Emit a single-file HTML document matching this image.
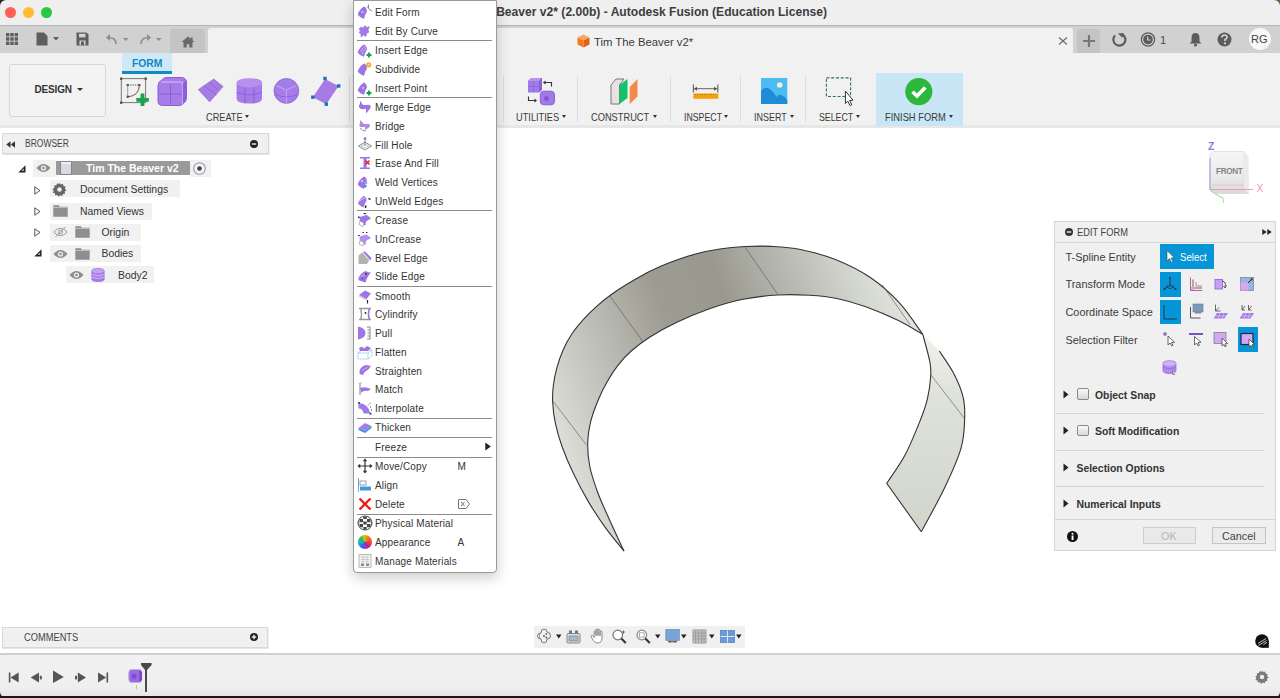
<!DOCTYPE html>
<html><head><meta charset="utf-8">
<style>
*{box-sizing:border-box;margin:0;padding:0}
html,body{width:1280px;height:698px;overflow:hidden;background:#fff;font-family:"Liberation Sans",sans-serif;color:#3c3c3c}
.a{position:absolute}
.t{position:absolute;white-space:nowrap;line-height:1}
#title{left:0;top:0;width:1280px;height:26px;background:#efefef}
#tabbar{left:0;top:24.8px;width:1280px;height:28.2px;background:#d1d1d1;border-top:1.3px solid #b6b6b6}
#doctab{left:208px;top:28px;width:865px;height:25px;background:#f1f1f1;border-radius:3px 3px 0 0}
#toolbar{left:0;top:53px;width:1280px;height:75px;background:#f1f1f1;border-bottom:3px solid #e7e7e7}
.sep{position:absolute;width:1px;background:#dcdcdc;top:76px;height:46px}
.lbl{position:absolute;top:111.8px;font-size:10.5px;color:#3a3a3a;white-space:nowrap;line-height:1;transform-origin:0 0}
.arr{position:absolute;top:115px;width:0;height:0;border-left:2.6px solid transparent;border-right:2.6px solid transparent;border-top:3.5px solid #333}
.menu{left:352.5px;top:0;width:144.5px;height:573px;background:#fff;border:1px solid #999;border-radius:0 0 4px 4px;box-shadow:0 5px 14px rgba(0,0,0,.2)}
.mi{position:absolute;left:375px;font-size:10px;letter-spacing:.15px;color:#333;white-space:nowrap;line-height:1}
.ms{position:absolute;left:357px;width:135px;height:1px;background:#8c8c8c}
.row{position:absolute;background:#f1f1f1}
</style></head><body>
<!-- title bar -->
<div id="title" class="a"></div>
<div class="a" style="left:5px;top:7px;width:11px;height:11px;border-radius:50%;background:#fe5f57"></div>
<div class="a" style="left:23px;top:7px;width:11px;height:11px;border-radius:50%;background:#febc2e"></div>
<div class="a" style="left:41px;top:7px;width:11px;height:11px;border-radius:50%;background:#28c840"></div>
<div class="t" style="right:453px;top:6.2px;font-size:12.1px;font-weight:bold;color:#3d3d3d">Tim The Beaver v2* (2.00b) - Autodesk Fusion (Education License)</div>

<!-- tab bar -->
<div id="tabbar" class="a"></div>
<div class="a" style="left:170px;top:29px;width:35px;height:24px;background:#c4c4c4;border-radius:3px 3px 0 0"></div>
<div id="doctab" class="a"></div>
<div class="a" style="left:1077px;top:29px;width:23px;height:24px;background:#c4c4c4;border-radius:3px 3px 0 0"></div>
<div class="t" style="left:594px;top:37px;font-size:11.3px;color:#3a3a3a">Tim The Beaver v2*</div>
<div class="a" style="left:1249px;top:28px;width:22px;height:22px;border-radius:50%;background:#f7f7f7"></div>
<div class="t" style="left:1251px;top:34px;font-size:11px;color:#444">RG</div>

<!-- toolbar -->
<div id="toolbar" class="a"></div>
<div class="a" style="left:9px;top:64px;width:97px;height:53px;border:1px solid #d6d6d6;border-radius:3px;background:#f3f3f3"></div>
<div class="t" style="left:34.6px;top:85px;font-size:10px;letter-spacing:-.2px;font-weight:bold;color:#333">DESIGN</div>
<div class="a" style="left:122px;top:53px;width:50px;height:19px;background:#cfe8f5"></div>
<div class="a" style="left:122px;top:71px;width:50px;height:3px;background:#0a8cc8"></div>
<div class="t" style="left:132px;top:58.5px;font-size:10.3px;font-weight:bold;color:#0b8ac2">FORM</div>
<div class="a" style="left:876px;top:73px;width:87px;height:53px;background:#c9e6f6"></div>
<div class="sep" style="left:348.5px"></div>
<div class="sep" style="left:503px"></div>
<div class="sep" style="left:577px"></div>
<div class="sep" style="left:670px"></div>
<div class="sep" style="left:740px"></div>
<div class="sep" style="left:805px"></div>
<div class="lbl" style="left:205.6px;transform:scaleX(0.876)">CREATE</div><div class="arr" style="left:245.4px"></div>
<div class="lbl" style="left:515.7px;transform:scaleX(0.88)">UTILITIES</div><div class="arr" style="left:561.6px"></div>
<div class="lbl" style="left:590.7px;transform:scaleX(0.883)">CONSTRUCT</div><div class="arr" style="left:652.6px"></div>
<div class="lbl" style="left:683.5px;transform:scaleX(0.835)">INSPECT</div><div class="arr" style="left:724px"></div>
<div class="lbl" style="left:753.8px;transform:scaleX(0.855)">INSERT</div><div class="arr" style="left:790.4px"></div>
<div class="lbl" style="left:819.4px;transform:scaleX(0.835)">SELECT</div><div class="arr" style="left:856px"></div>
<div class="lbl" style="left:885px;transform:scaleX(0.889)">FINISH FORM</div><div class="arr" style="left:948.8px"></div>

<!-- tabbar left icons -->
<svg class="a" style="left:5px;top:32px" width="14" height="14" viewBox="0 0 14 14" fill="#5e5e5e"><rect x="1" y="1" width="3.4" height="3.4"/><rect x="5.3" y="1" width="3.4" height="3.4"/><rect x="9.6" y="1" width="3.4" height="3.4"/><rect x="1" y="5.3" width="3.4" height="3.4"/><rect x="5.3" y="5.3" width="3.4" height="3.4"/><rect x="9.6" y="5.3" width="3.4" height="3.4"/><rect x="1" y="9.6" width="3.4" height="3.4"/><rect x="5.3" y="9.6" width="3.4" height="3.4"/><rect x="9.6" y="9.6" width="3.4" height="3.4"/></svg>
<svg class="a" style="left:36px;top:32px" width="26" height="14" viewBox="0 0 26 14" fill="#5e5e5e"><path d="M0.5 0.5h7.5l3.5 3.5v9.5H0.5z"/><path d="M17 5h6l-3 3.5z"/></svg>
<svg class="a" style="left:76px;top:32px" width="13" height="14" viewBox="0 0 13 14"><path d="M0.5 0.5h10l2 2v11H0.5z" fill="#5e5e5e"/><rect x="3" y="1.8" width="6.5" height="3.6" fill="#d2d2d2"/><rect x="3.5" y="8.5" width="6" height="4.5" fill="#d2d2d2"/><rect x="5" y="9.5" width="3" height="3.5" fill="#5e5e5e"/></svg>
<svg class="a" style="left:105px;top:33px" width="26" height="13" viewBox="0 0 26 13"><path d="M11 11 Q11 4.5 3.5 4.5" fill="none" stroke="#8e8e8e" stroke-width="1.6"/><path d="M1 4.5 L5 1 L5 8z" fill="#8e8e8e"/><path d="M18 5h5.5l-2.75 3z" fill="#8e8e8e"/></svg>
<svg class="a" style="left:139px;top:33px" width="26" height="13" viewBox="0 0 26 13"><path d="M2 11 Q2 4.5 9.5 4.5" fill="none" stroke="#8e8e8e" stroke-width="1.6"/><path d="M12 4.5 L8 1 L8 8z" fill="#8e8e8e"/><path d="M17 5h5.5l-2.75 3z" fill="#8e8e8e"/></svg>
<svg class="a" style="left:181px;top:36px" width="14" height="12" viewBox="0 0 14 12" fill="#6a6a6a"><path d="M7 0.5 L13.5 6 H11.5 V11.5 H8.3 V8.2 H5.7 V11.5 H2.5 V6 H0.5 Z"/><rect x="9.8" y="1.3" width="1.8" height="3.2"/></svg>
<!-- doc tab -->
<svg class="a" style="left:577px;top:34px" width="13" height="14" viewBox="0 0 13 14"><path d="M6.5 0.5 L12.5 3.5 L6.5 6.5 L0.5 3.5Z" fill="#f6a46a"/><path d="M0.5 3.5 L6.5 6.5 V13.5 L0.5 10.5Z" fill="#f47a22"/><path d="M12.5 3.5 L6.5 6.5 V13.5 L12.5 10.5Z" fill="#e2611a"/></svg>
<svg class="a" style="left:1058px;top:37px" width="10" height="8" viewBox="0 0 10 8"><path d="M1 0.5l8 7M9 0.5l-8 7" stroke="#6a6a6a" stroke-width="1.1"/></svg>
<!-- right icons -->
<svg class="a" style="left:1082px;top:34px" width="14" height="14" viewBox="0 0 14 14"><path d="M7 1v12M1 7h12" stroke="#777" stroke-width="2.2"/></svg>
<svg class="a" style="left:1111px;top:32px" width="16" height="15" viewBox="0 0 16 15"><path d="M4 3.5 A6 6 0 1 0 11.5 2.5" fill="none" stroke="#5c5c5c" stroke-width="2.2"/><path d="M7 1.5 L12.5 1 L11.5 6z" fill="#5c5c5c"/></svg>
<svg class="a" style="left:1140px;top:32px" width="16" height="15" viewBox="0 0 16 15"><circle cx="8" cy="7.5" r="6.6" fill="none" stroke="#5c5c5c" stroke-width="1.3"/><circle cx="8" cy="7.5" r="4.8" fill="#5c5c5c"/><path d="M7.6 4.5v3.5h3" stroke="#d2d2d2" stroke-width="1.2" fill="none"/></svg>
<div class="t" style="left:1160px;top:35px;font-size:11px;color:#4a4a4a">1</div>
<svg class="a" style="left:1189px;top:32px" width="13" height="15" viewBox="0 0 13 15" fill="#5c5c5c"><path d="M6.5 1 Q10.5 1 10.5 6 V9.5 L12.5 11.5 H0.5 L2.5 9.5 V6 Q2.5 1 6.5 1Z"/><circle cx="6.5" cy="13" r="1.6"/></svg>
<svg class="a" style="left:1217px;top:32px" width="15" height="15" viewBox="0 0 15 15"><circle cx="7.5" cy="7.5" r="7" fill="#5c5c5c"/><path d="M5 5.5 Q5 3 7.5 3 Q10 3 10 5.3 Q10 6.8 8 7.5 V9" fill="none" stroke="#d2d2d2" stroke-width="1.7"/><circle cx="8" cy="11.3" r="1.1" fill="#d2d2d2"/></svg>

<!-- design dropdown arrow -->
<div class="a" style="left:77px;top:88px;width:0;height:0;border-left:3px solid transparent;border-right:3px solid transparent;border-top:3.5px solid #333"></div>
<!-- CREATE icons -->
<svg class="a" style="left:119px;top:77px" width="32" height="30" viewBox="0 0 32 30"><rect x="2.3" y="1.6" width="24.3" height="24" fill="none" stroke="#777" stroke-width="1"/><rect x="1" y="0.5" width="2.4" height="2.4" fill="#555"/><rect x="25.5" y="0.5" width="2.4" height="2.4" fill="#555"/><rect x="1" y="24.5" width="2.4" height="2.4" fill="#555"/><path d="M8.7 8v11.8M8.7 8h11.7" stroke="#666" stroke-width=".9" stroke-dasharray="1.5 .8"/><path d="M20.4 8 Q20 19 8.7 19.8" stroke="#7a4b4b" stroke-width="1" fill="none"/><rect x="7.6" y="7" width="2.2" height="2.2" fill="#555"/><rect x="19.3" y="7" width="2.2" height="2.2" fill="#555"/><rect x="7.6" y="18.7" width="2.2" height="2.2" fill="#555"/><path d="M23.5 16.5v12.5M17.3 22.8h12.5" stroke="#16a34a" stroke-width="3.8"/></svg>
<svg class="a" style="left:157px;top:77px" width="31" height="30" viewBox="0 0 31 30"><path d="M5 3 Q6 0.5 10 0.5 L24 0.5 Q29.5 0.5 29.5 6 L29.5 20 Q29.5 25 26 27 L23 28.5 L5.5 28.5 Q1 28.5 1 24 L1 9 Q1 4.5 5 3Z" fill="#a67ce8" stroke="#8a5fd6" stroke-width="1"/><path d="M4 5 L24 5 Q26 5 26 8 L26 27.5" fill="none" stroke="#d5bff8" stroke-width="1.2"/><path d="M26 6 L29.5 3 L29.5 22 L26 27z" fill="#8b5fd8"/><path d="M13.5 7v20M2 17h23" stroke="#8a5fd6" stroke-width="1"/></svg>
<svg class="a" style="left:197px;top:78px" width="28" height="25" viewBox="0 0 28 25"><path d="M1.3 11.6 L16.75 1 L26.1 8.6 L12.6 23.9 Z" fill="#a57be6" stroke="#8e64d8" stroke-width=".6"/><path d="M7 7.7 L19.5 17 M12 4.3 L21.5 12" stroke="#8a60d4" stroke-width=".8"/></svg>
<svg class="a" style="left:236px;top:78px" width="27" height="27" viewBox="0 0 27 27"><path d="M0.6 5 Q0.6 0.4 13.3 0.4 Q26 0.4 26 5 V20.5 Q26 25.6 13.3 25.6 Q0.6 25.6 0.6 20.5Z" fill="#a67ce8"/><ellipse cx="13.3" cy="5" rx="12.7" ry="4.4" fill="#b590ee"/><path d="M0.6 14.5 Q13 19 26 14.5 M9 9.3 V25.2 M18 9.3 V25.2" stroke="#8a5fd6" stroke-width=".9" fill="none"/></svg>
<svg class="a" style="left:273px;top:78px" width="27" height="27" viewBox="0 0 27 27"><circle cx="13.4" cy="12.9" r="12.4" fill="#a67ce8" stroke="#8a5fd6" stroke-width=".8"/><path d="M13.4 12 L3 7.5 M13.4 12 L23.5 7.5 M13.4 12 V25" stroke="#c6a8f6" stroke-width="1" fill="none"/><path d="M2 16 Q13 22 25 16" stroke="#8a5fd6" stroke-width=".8" fill="none"/></svg>
<svg class="a" style="left:310px;top:76px" width="32" height="30" viewBox="0 0 32 30"><path d="M15 3 L28.6 10 L16.3 28.2 L2.8 21.2 Z" fill="#a57be6"/><rect x="13.3" y="0.8" width="3.4" height="3.4" fill="#1e6fb8"/><rect x="27" y="8.3" width="3.4" height="3.4" fill="#1e6fb8"/><rect x="14.6" y="26.5" width="3.4" height="3.4" fill="#1e6fb8"/><rect x="1.1" y="19.5" width="3.4" height="3.4" fill="#1e6fb8"/></svg>
<!-- FORM menu arrow region icon (behind menu) -->
<!-- UTILITIES -->
<svg class="a" style="left:527px;top:77px" width="29" height="29" viewBox="0 0 29 29"><path d="M1 4 L4 1 L15 1 L15 12.5 L12 15.5 L1 15.5Z" fill="#a07ae6"/><path d="M4 1 L15 1 L12 4 L1 4Z" fill="#b894f0"/><path d="M12 4 L15 1 V12.5 L12 15.5Z" fill="#8a60d6"/><path d="M1 9.5h11M6.5 4v11.5" stroke="#8a60d6" stroke-width=".6"/><rect x="13.3" y="14.2" width="14.2" height="13.6" rx="3.5" fill="#a07ae6" stroke="#8a5fd6" stroke-width="1"/><circle cx="19.5" cy="21.5" r="2.5" fill="#8458d0"/><path d="M16.5 5.5 L24.5 5.5 V9.5" fill="none" stroke="#333" stroke-width="1.1"/><path d="M16 5.5 L18.5 3.5 V7.5Z" fill="#333"/><path d="M1.5 19.5 V23.5 H9" fill="none" stroke="#333" stroke-width="1.1"/><path d="M10 23.5 L7.5 21.5 V25.5Z" fill="#333"/></svg>
<!-- CONSTRUCT -->
<svg class="a" style="left:610px;top:78px" width="29" height="27" viewBox="0 0 29 27"><path d="M1 7 L6 1 L14 1 L9.5 7 L9.5 26 L1 26Z" fill="#e8e2e2" stroke="#777" stroke-width="1"/><path d="M9.5 7 L17.5 1 L17.5 20 L9.5 26Z" fill="#14c268"/><path d="M19.7 9 L27.5 1 L27.5 18.5 L19.7 26Z" fill="#f28a48"/></svg>
<!-- INSPECT -->
<svg class="a" style="left:692px;top:84px" width="28" height="16" viewBox="0 0 28 16"><path d="M1.4 0.5v8M25.8 0.5v8" stroke="#666" stroke-width="1.2"/><path d="M2.5 4.7h22.5" stroke="#666" stroke-width="1"/><path d="M1.8 4.7 L5 2.7 V6.7Z M25.2 4.7 L22 2.7 V6.7Z" fill="#555"/><rect x="1.3" y="9.5" width="25" height="5.3" fill="#f5a20d"/><path d="M3 10.5h21" stroke="#8a5a00" stroke-width=".8" stroke-dasharray=".8 1.5"/></svg>
<!-- INSERT -->
<svg class="a" style="left:760px;top:78px" width="28" height="27" viewBox="0 0 28 27"><rect x="1" y="0" width="26.3" height="26" fill="#4cbcf2"/><path d="M1 13 Q5 8 9 10.5 Q13 13 16.5 19 Q19 16 21.5 17 Q25 18.5 27.3 22 V26 H1Z" fill="#1f8dd6"/><circle cx="19.7" cy="7" r="2.8" fill="#f4f0d0"/></svg>
<!-- SELECT -->
<svg class="a" style="left:824px;top:77px" width="32" height="30" viewBox="0 0 32 30"><rect x="2.4" y="0.9" width="24.2" height="18.6" fill="none" stroke="#2f7060" stroke-width="1.1" stroke-dasharray="3 1.8"/><path d="M21.4 14 L21.4 26.5 L23.8 24.2 L26 28.6 L27.8 27.7 L25.7 23.5 L29 23.2Z" fill="#fff" stroke="#333" stroke-width="1"/></svg>
<!-- FINISH -->
<svg class="a" style="left:905px;top:78px" width="28" height="28" viewBox="0 0 28 28"><circle cx="13.8" cy="13.6" r="13.6" fill="#2cb83a"/><path d="M7.5 13.8 L12 18 L20.3 9.6" fill="none" stroke="#fff" stroke-width="3.6"/></svg>

<svg class="a" style="left:0;top:0" width="1280" height="698" viewBox="0 0 1280 698">
<defs>
<linearGradient id="g1" gradientUnits="userSpaceOnUse" x1="555" y1="430" x2="925" y2="300"><stop offset="0" stop-color="#dcdfd7"/><stop offset=".2" stop-color="#b9bab2"/><stop offset=".36" stop-color="#9d9c92"/><stop offset=".52" stop-color="#9a998f"/><stop offset=".7" stop-color="#b9bbb3"/><stop offset=".86" stop-color="#d6d9d1"/><stop offset="1" stop-color="#e6e9e2"/></linearGradient>
<linearGradient id="g2" gradientUnits="userSpaceOnUse" x1="560" y1="550" x2="600" y2="380"><stop offset="0" stop-color="#e9eae4"/><stop offset=".6" stop-color="#cfd1c9"/><stop offset="1" stop-color="#b8b9b1"/></linearGradient>
<linearGradient id="g3" gradientUnits="userSpaceOnUse" x1="925" y1="340" x2="925" y2="530"><stop offset="0" stop-color="#eef0ea"/><stop offset=".3" stop-color="#dfe2d9"/><stop offset="1" stop-color="#d2d5cc"/></linearGradient>
</defs>
<path d="M624.0 551.1 C620.9 547.2 611.3 535.8 605.4 527.6 C599.5 519.4 593.8 510.8 588.5 501.9 C583.2 492.9 578.0 483.0 573.6 473.8 C569.2 464.7 565.2 455.4 562.2 447.0 C559.1 438.5 556.9 430.3 555.3 422.9 C553.7 415.5 553.0 408.7 552.7 402.4 C552.3 396.1 552.7 390.9 553.4 385.2 C554.1 379.5 555.2 373.9 556.8 368.1 C558.4 362.3 560.4 356.2 562.9 350.5 C565.3 344.8 568.3 339.2 571.8 334.0 C575.3 328.8 579.5 323.8 583.7 319.1 C587.9 314.5 592.4 310.2 596.9 306.1 C601.4 302.1 605.8 298.6 610.6 295.0 C615.5 291.4 620.7 288.0 626.1 284.7 C631.5 281.4 637.3 278.0 643.0 274.9 C648.7 271.9 654.5 269.2 660.2 266.6 C665.9 264.1 671.3 261.9 677.4 259.8 C683.5 257.6 689.6 255.5 696.6 253.7 C703.7 251.9 711.7 250.2 719.8 249.0 C727.8 247.8 736.6 247.0 745.2 246.5 C753.8 246.1 762.3 245.9 771.5 246.4 C780.7 246.9 789.9 247.3 800.5 249.5 C811.0 251.7 823.2 254.7 834.8 259.3 C846.4 264.0 859.3 270.1 870.0 277.3 C880.8 284.6 890.4 293.2 899.2 302.7 C908.0 312.2 918.9 329.1 922.8 334.4 C918.7 332.1 908.0 325.3 898.5 320.6 C889.0 316.0 876.1 310.4 865.8 306.7 C855.5 303.0 846.2 300.4 836.8 298.5 C827.5 296.5 819.6 295.8 809.8 295.2 C799.9 294.7 788.6 294.3 777.5 295.0 C766.4 295.7 754.6 297.0 743.1 299.3 C731.7 301.6 719.9 305.1 708.8 309.0 C697.6 312.9 686.1 317.9 676.4 322.6 C666.7 327.2 657.8 332.1 650.4 336.7 C643.0 341.4 637.2 345.8 631.8 350.5 C626.4 355.2 622.2 359.9 618.1 365.1 C614.0 370.3 610.5 375.8 607.2 381.8 C603.8 387.7 600.7 393.9 598.0 400.5 C595.3 407.1 592.6 414.0 590.8 421.2 C589.1 428.3 587.8 435.9 587.7 443.5 C587.5 451.1 588.3 458.9 589.9 467.0 C591.6 475.1 594.4 483.3 597.6 492.2 C600.9 501.0 605.3 510.4 609.7 520.2 C614.1 530.0 621.6 546.0 624.0 551.1Z" fill="url(#g1)"/>
<path d="M922.8 334.4 C925.5 337.2 934.2 344.6 939.3 351.0 C944.4 357.4 949.5 365.4 953.5 373.0 C957.5 380.6 961.1 388.9 963.0 396.7 C964.9 404.5 965.0 411.3 964.6 420.0 C964.2 428.7 964.3 437.3 960.9 448.7 C957.5 460.1 951.0 474.5 944.4 488.3 C937.8 502.1 925.1 524.5 921.3 531.8 L886.7 483.3 C889.7 478.6 899.3 465.9 904.9 455.3 C910.5 444.8 916.6 429.5 920.4 420.0 C924.2 410.5 925.8 405.6 927.5 398.3 C929.2 391.0 930.3 382.2 930.7 376.2 C931.1 370.1 931.2 369.0 929.9 362.0 C928.6 355.0 924.0 339.0 922.8 334.4Z" fill="url(#g3)"/>
<g fill="none" stroke="#333" stroke-width="1.1"><path d="M624.0 551.1 C620.9 547.2 611.3 535.8 605.4 527.6 C599.5 519.4 593.8 510.8 588.5 501.9 C583.2 492.9 578.0 483.0 573.6 473.8 C569.2 464.7 565.2 455.4 562.2 447.0 C559.1 438.5 556.9 430.3 555.3 422.9 C553.7 415.5 553.0 408.7 552.7 402.4 C552.3 396.1 552.7 390.9 553.4 385.2 C554.1 379.5 555.2 373.9 556.8 368.1 C558.4 362.3 560.4 356.2 562.9 350.5 C565.3 344.8 568.3 339.2 571.8 334.0 C575.3 328.8 579.5 323.8 583.7 319.1 C587.9 314.5 592.4 310.2 596.9 306.1 C601.4 302.1 605.8 298.6 610.6 295.0 C615.5 291.4 620.7 288.0 626.1 284.7 C631.5 281.4 637.3 278.0 643.0 274.9 C648.7 271.9 654.5 269.2 660.2 266.6 C665.9 264.1 671.3 261.9 677.4 259.8 C683.5 257.6 689.6 255.5 696.6 253.7 C703.7 251.9 711.7 250.2 719.8 249.0 C727.8 247.8 736.6 247.0 745.2 246.5 C753.8 246.1 762.3 245.9 771.5 246.4 C780.7 246.9 789.9 247.3 800.5 249.5 C811.0 251.7 823.2 254.7 834.8 259.3 C846.4 264.0 859.3 270.1 870.0 277.3 C880.8 284.6 890.4 293.2 899.2 302.7 C908.0 312.2 918.9 329.1 922.8 334.4"/><path d="M922.8 334.4 C918.7 332.1 908.0 325.3 898.5 320.6 C889.0 316.0 876.1 310.4 865.8 306.7 C855.5 303.0 846.2 300.4 836.8 298.5 C827.5 296.5 819.6 295.8 809.8 295.2 C799.9 294.7 788.6 294.3 777.5 295.0 C766.4 295.7 754.6 297.0 743.1 299.3 C731.7 301.6 719.9 305.1 708.8 309.0 C697.6 312.9 686.1 317.9 676.4 322.6 C666.7 327.2 657.8 332.1 650.4 336.7 C643.0 341.4 637.2 345.8 631.8 350.5 C626.4 355.2 622.2 359.9 618.1 365.1 C614.0 370.3 610.5 375.8 607.2 381.8 C603.8 387.7 600.7 393.9 598.0 400.5 C595.3 407.1 592.6 414.0 590.8 421.2 C589.1 428.3 587.8 435.9 587.7 443.5 C587.5 451.1 588.3 458.9 589.9 467.0 C591.6 475.1 594.4 483.3 597.6 492.2 C600.9 501.0 605.3 510.4 609.7 520.2 C614.1 530.0 621.6 546.0 624.0 551.1"/><path d="M922.8 334.4 C924.0 339.0 928.6 355.0 929.9 362.0 C931.2 369.0 931.1 370.1 930.7 376.2 C930.3 382.2 929.2 391.0 927.5 398.3 C925.8 405.6 924.2 410.5 920.4 420.0 C916.6 429.5 910.5 444.8 904.9 455.3 C899.3 465.9 889.7 478.6 886.7 483.3 L921.3 531.8"/><path d="M939.3 351.0 C941.7 354.7 949.5 365.4 953.5 373.0 C957.5 380.6 961.1 388.9 963.0 396.7 C964.9 404.5 965.0 411.3 964.6 420.0 C964.2 428.7 964.3 437.3 960.9 448.7 C957.5 460.1 951.0 474.5 944.4 488.3 C937.8 502.1 925.1 524.5 921.3 531.8"/></g>
<g fill="none" stroke="#55554f" stroke-width=".6"><path d="M609.5 295.5 L643 341.9"/><path d="M744.4 246.2 L777.3 293.7"/><path d="M882 284.5 L910.2 324.9"/><path d="M553 401.1 L586.2 444.7"/><path d="M930.7 374.6 L964.6 418.7"/></g>
</svg>
<!-- browser -->
<div class="a" style="left:1.5px;top:132.5px;width:267px;height:21.5px;background:#f0f0f0;border:1.5px solid #d8d8d8;box-shadow:0.5px 1px 0 #e4e4e4"></div>
<div class="t" style="left:24.6px;top:138.6px;font-size:10px;color:#444;transform:scaleX(.85);transform-origin:0 0">BROWSER</div>

<!-- browser header icons -->
<svg class="a" style="left:6px;top:141px" width="10" height="7" viewBox="0 0 10 7" fill="#333"><path d="M0.3 3.5 L4.5 0.3 V6.7Z M4.8 3.5 L9 0.3 V6.7Z"/></svg>
<svg class="a" style="left:250px;top:139.6px" width="8" height="8" viewBox="0 0 8 8"><circle cx="4" cy="4" r="4" fill="#222"/><rect x="1.8" y="3.3" width="4.4" height="1.4" fill="#eee"/></svg>
<!-- row 1 -->
<svg class="a" style="left:17.5px;top:164.5px" width="8" height="8" viewBox="0 0 8 8"><path d="M7.5 0.3 V7.5 H0.3Z" fill="#222"/><path d="M5.8 3.5 V5.8 H3.5Z" fill="#ddd"/></svg>
<div class="row" style="left:33px;top:160px;width:23px;height:16.5px"></div>
<svg class="a" style="left:36px;top:163px" width="15" height="10" viewBox="0 0 15 10"><path d="M0.5 5 Q7.5 -3 14.5 5 Q7.5 13 0.5 5Z" fill="#8e8e8e"/><circle cx="7.5" cy="5" r="2.6" fill="#efefef"/><circle cx="7.5" cy="5" r="1.3" fill="#8e8e8e"/></svg>
<div class="a" style="left:56px;top:161px;width:134px;height:14px;background:#9a9a9a"></div>
<svg class="a" style="left:60px;top:161px" width="12" height="14" viewBox="0 0 12 14"><rect x="0.5" y="0.5" width="11" height="13" rx="1.5" fill="#d8dbe6" stroke="#777" stroke-width=".8"/><path d="M1 1 L11 1 L11 3 L1 3" fill="#eef0f6"/></svg>
<div class="t" style="left:86px;top:163px;font-size:10.5px;font-weight:bold;color:#fff">Tim The Beaver v2</div>
<div class="row" style="left:190px;top:160px;width:21px;height:16.5px"></div>
<svg class="a" style="left:193px;top:161.5px" width="13" height="13" viewBox="0 0 13 13"><circle cx="6.5" cy="6.5" r="5.8" fill="#f4f4f8" stroke="#9a9aa6" stroke-width="1.1"/><circle cx="6.5" cy="6.5" r="2.3" fill="#3a3f4a"/></svg>
<!-- row 2 Document Settings -->
<svg class="a" style="left:34px;top:185.5px" width="7" height="9" viewBox="0 0 7 9"><path d="M0.8 0.8 L6 4.5 L0.8 8.2Z" fill="none" stroke="#555" stroke-width="1"/></svg>
<div class="row" style="left:50px;top:180px;width:129.5px;height:17px"></div>
<svg class="a" style="left:52px;top:182px" width="15" height="15" viewBox="0 0 15 15"><path d="M7.5 0.5l1.3 1.9 2.2-.6.4 2.2 2.2.6-.7 2.1 1.6 1.6-1.9 1.2.5 2.2-2.2.3-.7 2.1-2.1-.9-1.6 1.6-1.2-1.9-2.2.4-.2-2.3L0.8 10.8l.9-2.1L0.5 6.9l1.9-1.2-.2-2.2 2.2-.2.9-2.1 2 1z" fill="#666"/><circle cx="7.5" cy="7.5" r="2.3" fill="#efefef"/></svg>
<div class="t" style="left:80px;top:184.5px;font-size:10.45px;color:#333">Document Settings</div>
<!-- row 3 Named Views -->
<svg class="a" style="left:34px;top:206.5px" width="7" height="9" viewBox="0 0 7 9"><path d="M0.8 0.8 L6 4.5 L0.8 8.2Z" fill="none" stroke="#555" stroke-width="1"/></svg>
<div class="row" style="left:50px;top:202.5px;width:101.5px;height:17px"></div>
<svg class="a" style="left:52.5px;top:205px" width="15" height="12" viewBox="0 0 15 12" fill="#8e8e8e"><path d="M0.3 0.3h5.5l1 1.5h7.9v10H0.3z"/><path d="M0.3 2.5h14.4" stroke="#efefef" stroke-width=".5"/></svg>
<div class="t" style="left:80px;top:206.7px;font-size:10.4px;color:#333">Named Views</div>
<!-- row 4 Origin -->
<svg class="a" style="left:34px;top:227.5px" width="7" height="9" viewBox="0 0 7 9"><path d="M0.8 0.8 L6 4.5 L0.8 8.2Z" fill="none" stroke="#555" stroke-width="1"/></svg>
<div class="row" style="left:50px;top:223.5px;width:91px;height:17px"></div>
<svg class="a" style="left:52.5px;top:226px" width="15" height="12" viewBox="0 0 15 12"><path d="M0.8 6 Q7.5 -1.5 14.2 6 Q7.5 13.5 0.8 6Z" fill="none" stroke="#9a9a9a" stroke-width="1"/><circle cx="7.5" cy="6" r="2" fill="none" stroke="#9a9a9a" stroke-width="1"/><path d="M2.5 11 L12.5 1" stroke="#9a9a9a" stroke-width="1"/></svg>
<svg class="a" style="left:75px;top:226px" width="15" height="12" viewBox="0 0 15 12" fill="#8e8e8e"><path d="M0.3 0.3h5.5l1 1.5h7.9v10H0.3z"/><path d="M0.3 2.5h14.4" stroke="#efefef" stroke-width=".5"/></svg>
<div class="t" style="left:101.5px;top:227.7px;font-size:10.4px;color:#333">Origin</div>
<!-- row 5 Bodies -->
<svg class="a" style="left:33.5px;top:249px" width="8" height="8" viewBox="0 0 8 8"><path d="M7.5 0.3 V7.5 H0.3Z" fill="#222"/><path d="M5.8 3.5 V5.8 H3.5Z" fill="#ddd"/></svg>
<div class="row" style="left:50px;top:245.3px;width:91px;height:17px"></div>
<svg class="a" style="left:52.5px;top:249px" width="15" height="10" viewBox="0 0 15 10"><path d="M0.5 5 Q7.5 -3 14.5 5 Q7.5 13 0.5 5Z" fill="#8e8e8e"/><circle cx="7.5" cy="5" r="2.6" fill="#efefef"/><circle cx="7.5" cy="5" r="1.3" fill="#8e8e8e"/></svg>
<svg class="a" style="left:75px;top:247.5px" width="15" height="12" viewBox="0 0 15 12" fill="#8e8e8e"><path d="M0.3 0.3h5.5l1 1.5h7.9v10H0.3z"/><path d="M0.3 2.5h14.4" stroke="#efefef" stroke-width=".5"/></svg>
<div class="t" style="left:101.5px;top:249.2px;font-size:10.4px;color:#333">Bodies</div>
<!-- row 6 Body2 -->
<div class="row" style="left:66.3px;top:266.4px;width:87.7px;height:17px"></div>
<svg class="a" style="left:68.5px;top:270px" width="15" height="10" viewBox="0 0 15 10"><path d="M0.5 5 Q7.5 -3 14.5 5 Q7.5 13 0.5 5Z" fill="#8e8e8e"/><circle cx="7.5" cy="5" r="2.6" fill="#efefef"/><circle cx="7.5" cy="5" r="1.3" fill="#8e8e8e"/></svg>
<svg class="a" style="left:91px;top:268px" width="14" height="14" viewBox="0 0 14 14"><path d="M0.8 3 Q0.8 0.5 7 0.5 Q13.2 0.5 13.2 3 V11 Q13.2 13.5 7 13.5 Q0.8 13.5 0.8 11Z" fill="#a67ce8" stroke="#8a5fd6" stroke-width=".6"/><ellipse cx="7" cy="3" rx="6" ry="2.2" fill="#c3a4f3"/><path d="M0.8 6.5 Q7 9 13.2 6.5M0.8 9.3 Q7 11.8 13.2 9.3" stroke="#e3d4fb" stroke-width=".7" fill="none"/></svg>
<div class="t" style="left:118px;top:270.7px;font-size:10.4px;color:#333">Body2</div>

<!-- comments -->
<div class="a" style="left:1.5px;top:627px;width:266px;height:21.3px;background:#f0f0f0;border:1.5px solid #d8d8d8;box-shadow:0.5px 1px 0 #e4e4e4"></div>
<div class="t" style="left:24.4px;top:632.5px;font-size:10px;color:#444;transform:scaleX(.93);transform-origin:0 0">COMMENTS</div>

<!-- timeline -->
<div class="a" style="left:0;top:653px;width:1280px;height:2px;background:#cfcfcf"></div>
<div class="a" style="left:0;top:655px;width:1280px;height:41.3px;background:linear-gradient(#f1f1f1,#efefef 75%,#e6e6e6)"></div>
<div class="a" style="left:0;top:696.3px;width:1280px;height:1.7px;background:#1a1a1a"></div>

<!-- nav bar -->
<div class="a" style="left:534px;top:626px;width:211px;height:22px;background:#f0f0f0"></div>

<svg class="a" style="left:250px;top:633px" width="8" height="8" viewBox="0 0 8 8"><circle cx="4" cy="4" r="4" fill="#222"/><rect x="1.8" y="3.3" width="4.4" height="1.4" fill="#eee"/><rect x="3.3" y="1.8" width="1.4" height="4.4" fill="#eee"/></svg>
<!-- timeline controls -->
<svg class="a" style="left:8px;top:670px" width="104" height="14" viewBox="0 0 104 14" fill="#555"><rect x="0.8" y="2.5" width="1.6" height="10"/><path d="M2.5 7.5 L10.7 2.5 V12.5Z"/><path d="M22.6 7.5 L31 2.5 V12.5Z"/><rect x="31.8" y="5.8" width="2" height="3.6"/><path d="M45 0.6 L55.8 7 L45 13Z"/><rect x="67" y="5.8" width="2" height="3.6"/><path d="M78 7.5 L69.8 2.5 V12.5Z"/><path d="M90 2.5 L98.2 7.5 L90 12.5Z"/><rect x="98.5" y="2.5" width="1.6" height="10"/></svg>
<svg class="a" style="left:128px;top:667.5px" width="15" height="15" viewBox="0 0 15 15"><rect x="0.8" y="1.5" width="13" height="13" rx="3" fill="#9a6ae0" stroke="#c8a8f2" stroke-width="1"/><path d="M11 2 L14 4 V12 L11.5 14" fill="#7a48c8"/><circle cx="6" cy="8.3" r="2.5" fill="#7e4cd0"/></svg>
<svg class="a" style="left:141px;top:663px" width="11" height="30" viewBox="0 0 11 30"><path d="M0 0 H10.6 V2 L6 7 V29 H4 V7 L0 2Z" fill="#4a4a4a"/></svg>
<div class="a" style="left:136px;top:685px;width:1px;height:4px;background:#b8c8a0"></div>
<!-- settings gear bottom right -->
<svg class="a" style="left:1255px;top:670px" width="14" height="14" viewBox="0 0 14 14"><path d="M7 0.3l1.2 1.8 2-.6.4 2.1 2.1.5-.6 2 1.6 1.5-1.8 1.2.5 2.1-2.1.3-.6 2-2-.8-1.5 1.6-1.2-1.8-2.1.4-.3-2.1L0.5 10l.9-2L0.3 6.5l1.8-1.2-.3-2.1 2.1-.2.8-2 2 .9z" fill="#7a7a7a"/><circle cx="7" cy="7" r="2.2" fill="#efefef"/></svg>
<!-- bottom right black badge -->
<svg class="a" style="left:1254.5px;top:633.5px" width="15" height="15" viewBox="0 0 15 15"><circle cx="7" cy="7" r="6.8" fill="#111"/><rect x="7" y="7" width="6.8" height="6.8" fill="#111"/><path d="M3 9.5 L11 4.5 M3.5 11.5 L11.5 6.5 M8.5 10.5 L12 8.3" stroke="#d8d8d8" stroke-width=".9"/></svg>
<!-- nav bar icons -->
<svg class="a" style="left:536px;top:628px" width="16" height="16" viewBox="0 0 16 16"><path d="M8 1 Q11 1 11 4 Q14.5 4 14.5 8 Q14.5 11 11 11 Q11 15 8 15 Q5 15 5 11 Q1.5 11 1.5 8 Q1.5 5 5 5 Q5 1 8 1Z" fill="none" stroke="#777" stroke-width="1"/><circle cx="8" cy="8" r=".9" fill="#555"/><circle cx="10.3" cy="5.8" r=".9" fill="#555"/><circle cx="10.3" cy="9.5" r=".9" fill="#555"/><path d="M1 8 L3.5 6 V10Z" fill="#fff" stroke="#777" stroke-width=".6"/></svg>
<svg class="a" style="left:555.5px;top:634px" width="6" height="5" viewBox="0 0 6 5"><path d="M0 0.5h5.5L2.75 4.5z" fill="#222"/></svg>
<svg class="a" style="left:566px;top:628.5px" width="15" height="15" viewBox="0 0 15 15"><rect x="1" y="4.5" width="13" height="9.5" rx="1" fill="#d8dde4" stroke="#888" stroke-width="1"/><rect x="3" y="7" width="9" height="5" fill="#a8b8cc" stroke="#777" stroke-width=".6"/><path d="M3 4.5 V1.5 H6 V4.5 M9 4.5 V1.5 H12 V4.5" fill="#777"/></svg>
<svg class="a" style="left:589.5px;top:628px" width="15" height="16" viewBox="0 0 15 16"><path d="M4.2 9.5 V3.8 Q4.2 2.6 5.1 2.6 Q6 2.6 6 3.8 V7.8 M6 7.5 V2 Q6 0.9 7 0.9 Q8 0.9 8 2 V7.5 M8 7.5 V2.6 Q8 1.5 9 1.5 Q10 1.5 10 2.6 V7.8 M10 7.8 V4.2 Q10 3.1 11 3.1 Q12 3.1 12 4.2 V10 Q12 15 7.5 15 Q4.8 15 3.3 12.5 L1.2 8.8 Q0.7 7.6 1.6 7.3 Q2.5 7 3.2 8.2 L4.2 9.5" fill="#fff" stroke="#7a7a7a" stroke-width=".9" stroke-linejoin="round"/></svg>
<svg class="a" style="left:612px;top:628.5px" width="15" height="15" viewBox="0 0 15 15"><circle cx="5.8" cy="6" r="4.8" fill="#fff" stroke="#777" stroke-width="1.2"/><path d="M9.3 9.5 L13.8 14" stroke="#333" stroke-width="2"/><path d="M11.5 1.5v3M10 3h3" stroke="#555" stroke-width=".8"/></svg>
<svg class="a" style="left:635.5px;top:628.5px" width="15" height="15" viewBox="0 0 15 15"><circle cx="5.8" cy="6" r="4.8" fill="#fff" stroke="#888" stroke-width="1.2"/><rect x="3.5" y="3.8" width="4.6" height="4.4" fill="none" stroke="#999" stroke-width=".8"/><path d="M9.3 9.5 L13.8 14" stroke="#333" stroke-width="2"/></svg>
<svg class="a" style="left:654.5px;top:634px" width="6" height="5" viewBox="0 0 6 5"><path d="M0 0.5h5.5L2.75 4.5z" fill="#222"/></svg>
<svg class="a" style="left:664.5px;top:628.5px" width="15" height="15" viewBox="0 0 15 15"><rect x="0.8" y="0.5" width="13.5" height="11" fill="#7aa3d8" stroke="#6a8ab8" stroke-width=".7"/><path d="M3 12.8 H12 M5 12 V13.5 M10 12 V13.5" stroke="#444" stroke-width="1"/></svg>
<svg class="a" style="left:681px;top:634px" width="6" height="5" viewBox="0 0 6 5"><path d="M0 0.5h5.5L2.75 4.5z" fill="#222"/></svg>
<svg class="a" style="left:692px;top:628.5px" width="15" height="15" viewBox="0 0 15 15"><rect x="0.7" y="0.7" width="13.6" height="13.6" rx="1" fill="#bdbdbd" stroke="#999" stroke-width=".6"/><path d="M3.5 1v13M6.5 1v13M9.5 1v13M12 1v13M1 4h13M1 7h13M1 10h13" stroke="#8a8a8a" stroke-width=".5"/></svg>
<svg class="a" style="left:708.5px;top:634px" width="6" height="5" viewBox="0 0 6 5"><path d="M0 0.5h5.5L2.75 4.5z" fill="#222"/></svg>
<svg class="a" style="left:719.5px;top:629.5px" width="15" height="13" viewBox="0 0 15 13"><rect x="0.5" y="0.5" width="14" height="12" fill="#6a9ad8" stroke="#5a84bc" stroke-width=".8"/><path d="M7.5 0.5v12M0.5 6.5h14" stroke="#dbe8f6" stroke-width="1"/></svg>
<svg class="a" style="left:736px;top:634px" width="6" height="5" viewBox="0 0 6 5"><path d="M0 0.5h5.5L2.75 4.5z" fill="#222"/></svg>
<!-- viewcube -->
<svg class="a" style="left:1200px;top:136px" width="72" height="72" viewBox="0 0 72 72">
<defs><linearGradient id="vc" x1="0" y1="0" x2="0" y2="1"><stop offset="0" stop-color="#f6f6f6"/><stop offset=".6" stop-color="#ececec"/><stop offset="1" stop-color="#dedede"/></linearGradient></defs>
<path d="M10 18 L13 15.5 L44 15.5 L44 53.5 L10 53.5Z" fill="url(#vc)" stroke="#dedede" stroke-width=".8"/>
<path d="M44 15.5 L48.5 20 L49 58 L44 53.5Z" fill="#ebebeb"/>
<path d="M10 53.5 L44 53.5 L49 58 L14 58Z" fill="#dadada"/>
<path d="M10 22 V54" stroke="#9a94dc" stroke-width="1"/>
<path d="M10 53.5 H53" stroke="#e8a0aa" stroke-width="1.2"/>
<path d="M12 49 H44" stroke="#f2c4ca" stroke-width="1"/>
<path d="M10 54 Q18 60 23 62 L23.5 67" stroke="#a6e8a0" stroke-width="1.2" fill="none"/>
<text x="8" y="13.5" font-family="Liberation Sans" font-size="10.5" font-weight="bold" fill="#8580d6">Z</text>
<text x="56.5" y="55.5" font-family="Liberation Sans" font-size="10" fill="#ee9aa6">X</text>
<text x="16" y="38" font-family="Liberation Sans" font-size="8.2" font-weight="bold" fill="#858585" letter-spacing="-.35">FRONT</text>
</svg><svg class="a" style="left:0;top:691px" width="8" height="7" viewBox="0 0 8 7"><path d="M0 0 V7 H8 V5.5 A5.5 5.5 0 0 1 0 0Z" fill="#1a1a1a"/></svg>
<svg class="a" style="left:1272px;top:691px" width="8" height="7" viewBox="0 0 8 7"><path d="M8 0 V7 H0 V5.5 A5.5 5.5 0 0 0 8 0Z" fill="#1a1a1a"/></svg>
<svg class="a" style="left:0;top:0" width="6" height="6" viewBox="0 0 6 6"><path d="M0 0 H6 A6 6 0 0 0 0 6Z" fill="#2a2420"/></svg>
<svg class="a" style="left:1274px;top:0" width="6" height="6" viewBox="0 0 6 6"><path d="M6 0 H0 A6 6 0 0 1 6 6Z" fill="#7a5a3a"/></svg>

<!-- edit form panel -->
<div class="a" style="left:1054px;top:221px;width:222px;height:330px;background:#f0f0f0;border:1px solid #d4d4d4"></div>
<div class="a" style="left:1055px;top:242px;width:220px;height:1px;background:#d8d8d8"></div>
<div class="t" style="left:1076.5px;top:227px;font-size:10.5px;color:#444;transform:scaleX(.885);transform-origin:0 0">EDIT FORM</div>

<svg class="a" style="left:1064.5px;top:227.6px" width="8" height="8" viewBox="0 0 8 8"><circle cx="4" cy="4" r="4" fill="#333"/><rect x="1.8" y="3.3" width="4.4" height="1.4" fill="#eee"/></svg>
<svg class="a" style="left:1262px;top:229px" width="10" height="6" viewBox="0 0 10 6" fill="#222"><path d="M0.3 0 L4.7 3 L0.3 6Z M5.3 0 L9.7 3 L5.3 6Z"/></svg>
<div class="t" style="left:1065.5px;top:251.5px;font-size:10.9px;color:#3a3a3a">T-Spline Entity</div>
<div class="t" style="left:1065.5px;top:279px;font-size:10.9px;color:#3a3a3a">Transform Mode</div>
<div class="t" style="left:1065.5px;top:306.8px;font-size:10.9px;color:#3a3a3a">Coordinate Space</div>
<div class="t" style="left:1065.5px;top:334.5px;font-size:10.9px;color:#3a3a3a">Selection Filter</div>
<div class="a" style="left:1160px;top:244.4px;width:53.6px;height:24.3px;background:#0696d7"></div>
<svg class="a" style="left:1166px;top:250px" width="9" height="13" viewBox="0 0 9 13"><path d="M1 0.5 V11 L3.5 8.5 L5.5 12.5 L7 11.8 L5 8 L8.3 7.8Z" fill="#fff" stroke="#333" stroke-width=".5"/></svg>
<div class="t" style="left:1179.5px;top:251.5px;font-size:10.8px;color:#fff;transform:scaleX(.89);transform-origin:0 0">Select</div>
<div class="a" style="left:1160px;top:272.1px;width:20.7px;height:24.5px;background:#0696d7"></div>
<div class="a" style="left:1160px;top:299.8px;width:20.7px;height:24.5px;background:#0696d7"></div>
<div class="a" style="left:1237.7px;top:327.3px;width:20.7px;height:24.7px;background:#0696d7"></div>
<!-- transform mode icons -->
<svg class="a" style="left:1162px;top:276px" width="16" height="16" viewBox="0 0 16 16"><path d="M8 2v7M8 9 L2.5 13M8 9 L13.5 13" stroke="#213a52" stroke-width="1" fill="none"/><path d="M4.5 9 A3.5 3.5 0 0 0 11.5 9" fill="none" stroke="#213a52" stroke-width=".8"/><circle cx="8" cy="2" r="1" fill="#213a52"/><circle cx="2.5" cy="13" r="1" fill="#213a52"/><circle cx="13.5" cy="13" r="1" fill="#213a52"/></svg>
<svg class="a" style="left:1188px;top:276px" width="16" height="16" viewBox="0 0 16 16"><path d="M2.5 1.5v13h12" fill="none" stroke="#c06080" stroke-width="1"/><path d="M5 3.5v8.5h9" fill="none" stroke="#555" stroke-width=".9"/><path d="M8 6v4h6" fill="none" stroke="#c06080" stroke-width=".8"/><rect x="3" y="11" width="3" height="3" fill="#c9a8f5"/></svg>
<svg class="a" style="left:1213px;top:276px" width="16" height="16" viewBox="0 0 16 16"><rect x="2" y="3.5" width="7.5" height="9.5" fill="#c9a0f5" stroke="#8a5fd6" stroke-width=".8"/><path d="M9.5 5 Q13.5 6.5 12 10.5" fill="none" stroke="#333" stroke-width=".9"/><path d="M10.5 10 L12 12 L13.5 9.5" fill="none" stroke="#333" stroke-width=".8"/></svg>
<svg class="a" style="left:1239px;top:276px" width="16" height="16" viewBox="0 0 16 16"><rect x="1.5" y="1.5" width="13" height="13" fill="#98b4d8" stroke="#7a8aa0" stroke-width=".8"/><rect x="1.5" y="6.5" width="8" height="8" fill="#d6a8f0"/><path d="M9 7 L13.5 2.5" stroke="#222" stroke-width="1"/><path d="M13.5 2.5 L11 2.8 L13.2 5Z" fill="#222"/></svg>
<!-- coord space icons -->
<svg class="a" style="left:1162px;top:303.5px" width="16" height="17" viewBox="0 0 16 17"><path d="M2 1v14h13" fill="none" stroke="#1a3650" stroke-width="1"/></svg>
<svg class="a" style="left:1188px;top:303px" width="16" height="16" viewBox="0 0 16 16"><rect x="5" y="1" width="10" height="8" fill="#7b9ac0" stroke="#6a7a8a" stroke-width=".6"/><path d="M7 9h6v1.5H7z" fill="#888"/><path d="M2.5 4v11h10" fill="none" stroke="#555" stroke-width="1"/></svg>
<svg class="a" style="left:1213px;top:303px" width="16" height="16" viewBox="0 0 16 16"><path d="M4 10 L15 10 L11.5 15.5 L0.5 15.5Z" fill="#a27ae8"/><path d="M2 13h11M7 10l-2 5.5M11 10l-2 5.5" stroke="#e6d8fb" stroke-width=".6"/><path d="M2.5 1.5v6.5h5" fill="none" stroke="#444" stroke-width=".8"/><path d="M2.5 8 L6 4.5" stroke="#444" stroke-width=".8"/></svg>
<svg class="a" style="left:1239px;top:303px" width="16" height="16" viewBox="0 0 16 16"><path d="M4 10 L15 10 L11.5 15.5 L0.5 15.5Z" fill="#a27ae8"/><path d="M2 13h11M7 10l-2 5.5M11 10l-2 5.5" stroke="#e6d8fb" stroke-width=".6"/><path d="M3 2v5h3M9.5 2v5h3" fill="none" stroke="#444" stroke-width=".8"/><path d="M3 7l3-4M9.5 7l3-4" stroke="#444" stroke-width=".8"/></svg>
<!-- selection filter -->
<svg class="a" style="left:1162px;top:331px" width="16" height="16" viewBox="0 0 16 16"><circle cx="3" cy="3" r="1.5" fill="#a27ae8" stroke="#555" stroke-width=".5"/><path d="M6 5 V14 L8 12 L9.8 15 L11 14.3 L9.5 11.5 L12.5 11.3Z" fill="#fff" stroke="#444" stroke-width=".8"/></svg>
<svg class="a" style="left:1188px;top:331px" width="16" height="16" viewBox="0 0 16 16"><path d="M1 3h14" stroke="#7a52c7" stroke-width="2"/><path d="M6.5 5.5 V14 L8.5 12 L10.2 15 L11.4 14.3 L10 11.5 L13 11.3Z" fill="#fff" stroke="#444" stroke-width=".8"/></svg>
<svg class="a" style="left:1213px;top:331px" width="16" height="16" viewBox="0 0 16 16"><rect x="1" y="1.5" width="12" height="11" fill="#d2a8f2" stroke="#777" stroke-width=".7"/><path d="M9 7 V15 L10.7 13.3 L12.2 16 L13.2 15.4 L12 12.8 L14.6 12.6Z" fill="#fff" stroke="#444" stroke-width=".8"/></svg>
<svg class="a" style="left:1239.5px;top:331.5px" width="17" height="16" viewBox="0 0 17 16"><rect x="1" y="1.5" width="12" height="11" fill="#d2a8f2" stroke="#1c2c40" stroke-width="1.2"/><path d="M9 7 V15 L10.7 13.3 L12.2 16 L13.2 15.4 L12 12.8 L14.6 12.6Z" fill="#fff" stroke="#444" stroke-width=".8"/></svg>
<svg class="a" style="left:1162px;top:359.5px" width="16" height="15" viewBox="0 0 16 15"><path d="M1 3.5 Q1 0.8 7.5 0.8 Q14 0.8 14 3.5 V10.5 Q14 13.5 7.5 13.5 Q1 13.5 1 10.5Z" fill="#b08aec" stroke="#8a5fd6" stroke-width=".7"/><ellipse cx="7.5" cy="3.5" rx="6.3" ry="2.4" fill="#cdb2f6"/><path d="M1 7.5 Q7.5 10 14 7.5" stroke="#8a5fd6" stroke-width=".7" fill="none"/><path d="M11 10 V15 L12.3 13.8 L13.2 15.5" fill="#fff" stroke="#444" stroke-width=".6"/></svg>
<!-- sections -->
<svg class="a" style="left:1062.5px;top:390px" width="6" height="9" viewBox="0 0 6 9"><path d="M0.5 0.5 L5.5 4.5 L0.5 8.5Z" fill="#222"/></svg>
<div class="a" style="left:1077px;top:388px;width:12px;height:11.5px;border:1px solid #8a8a8a;border-radius:2px;background:linear-gradient(#fafafa,#d8d8d8)"></div>
<div class="t" style="left:1095px;top:391px;font-size:10.4px;font-weight:bold;color:#333">Object Snap</div>
<div class="a" style="left:1056px;top:413px;width:208px;height:1px;background:#d2d2d2"></div>
<svg class="a" style="left:1062.5px;top:426px" width="6" height="9" viewBox="0 0 6 9"><path d="M0.5 0.5 L5.5 4.5 L0.5 8.5Z" fill="#222"/></svg>
<div class="a" style="left:1077px;top:424.5px;width:12px;height:11.5px;border:1px solid #8a8a8a;border-radius:2px;background:linear-gradient(#fafafa,#d8d8d8)"></div>
<div class="t" style="left:1095px;top:427.3px;font-size:10.4px;font-weight:bold;color:#333">Soft Modification</div>
<div class="a" style="left:1056px;top:449.5px;width:208px;height:1px;background:#d2d2d2"></div>
<svg class="a" style="left:1062.5px;top:462.5px" width="6" height="9" viewBox="0 0 6 9"><path d="M0.5 0.5 L5.5 4.5 L0.5 8.5Z" fill="#222"/></svg>
<div class="t" style="left:1076.5px;top:463.5px;font-size:10.4px;font-weight:bold;color:#333">Selection Options</div>
<div class="a" style="left:1056px;top:486px;width:208px;height:1px;background:#d2d2d2"></div>
<svg class="a" style="left:1062.5px;top:499px" width="6" height="9" viewBox="0 0 6 9"><path d="M0.5 0.5 L5.5 4.5 L0.5 8.5Z" fill="#222"/></svg>
<div class="t" style="left:1076.5px;top:500px;font-size:10.4px;font-weight:bold;color:#333">Numerical Inputs</div>
<div class="a" style="left:1055px;top:518.5px;width:220px;height:1px;background:#d6d6d6"></div>
<svg class="a" style="left:1067px;top:530.5px" width="11" height="11" viewBox="0 0 11 11"><circle cx="5.5" cy="5.5" r="5.5" fill="#111"/><rect x="4.6" y="4.5" width="1.9" height="4.5" fill="#fff"/><circle cx="5.5" cy="2.8" r="1" fill="#fff"/></svg>
<div class="a" style="left:1143px;top:527px;width:52.6px;height:17px;border:1px solid #cdcdcd;background:#e9e9e9"></div>
<div class="t" style="left:1161px;top:530.5px;font-size:10.8px;color:#b5b5b5">OK</div>
<div class="a" style="left:1212px;top:527px;width:53.6px;height:17px;border:1px solid #c4c4c4;background:#ebebeb"></div>
<div class="t" style="left:1222px;top:530.5px;font-size:10.8px;color:#444">Cancel</div>

<!-- dropdown menu -->
<div class="a menu"></div>
<div class="mi" style="top:8.04px">Edit Form</div>
<svg class="a" style="left:357px;top:3.9px" width="16" height="16" viewBox="0 0 16 16"><path d="M1.3 9.5 Q3.5 4.5 7.5 2.8 Q9.7 4.8 9.6 7.5 Q7.6 10.5 6.8 14.4 Q3.5 13.2 1.3 11Z" fill="#9f74e6" stroke="#7a52c7" stroke-width=".5"/><path d="M11.5 0.5v3.5M10 2.5l3 3.5M12.5 5.5l2.5 1.5" stroke="#888" stroke-width="1" fill="none"/><circle cx="5.5" cy="8" r="1.2" fill="#c9b0f5"/></svg>
<div class="mi" style="top:26.74px">Edit By Curve</div>
<svg class="a" style="left:357px;top:22.6px" width="16" height="16" viewBox="0 0 16 16"><path d="M2 6 L4 4 L6 5 L8 2.5 L10 4.5 L12.5 3.5 L11 7 L12 9 L9.5 10.5 L9 13.5 L6.5 12 L4 14 L4 11 L2 9.5 L3.5 8 Z" fill="#a27ae8" stroke="#8a64d8" stroke-width=".5"/></svg>
<div class="ms" style="top:40px"></div>
<div class="mi" style="top:46.23px">Insert Edge</div>
<svg class="a" style="left:357px;top:42.1px" width="16" height="16" viewBox="0 0 16 16"><path d="M1.3 9.5 Q3.5 4.5 7.5 2.8 Q9.7 4.8 9.6 7.5 Q7.6 10.5 6.8 14.4 Q3.5 13.2 1.3 11Z" fill="#9f74e6" stroke="#7a52c7" stroke-width=".5"/><path d="M3.5 10 Q5 6 9 3.8M5 12.8 Q6.5 8 9.5 5.5" stroke="#d3bef8" stroke-width=".8" fill="none"/><path d="M9.5 13h5M12 10.5v5" stroke="#1aa34a" stroke-width="1.9"/></svg>
<div class="mi" style="top:64.93px">Subdivide</div>
<svg class="a" style="left:357px;top:60.8px" width="16" height="16" viewBox="0 0 16 16"><path d="M1.3 9.5 Q3.5 4.5 7.5 2.8 Q9.7 4.8 9.6 7.5 Q7.6 10.5 6.8 14.4 Q3.5 13.2 1.3 11Z" fill="#9f74e6" stroke="#7a52c7" stroke-width=".5"/><circle cx="11.7" cy="3.8" r="2.6" fill="#f5a623"/><circle cx="11.7" cy="3.8" r="1.2" fill="#fcd27a"/></svg>
<div class="mi" style="top:83.63px">Insert Point</div>
<svg class="a" style="left:357px;top:79.5px" width="16" height="16" viewBox="0 0 16 16"><path d="M1.3 9.5 Q3.5 4.5 7.5 2.8 Q9.7 4.8 9.6 7.5 Q7.6 10.5 6.8 14.4 Q3.5 13.2 1.3 11Z" fill="#9f74e6" stroke="#7a52c7" stroke-width=".5"/><circle cx="6" cy="8" r="1.2" fill="#c9b0f5"/><path d="M9.5 13h5M12 10.5v5" stroke="#1aa34a" stroke-width="1.9"/></svg>
<div class="ms" style="top:97px"></div>
<div class="mi" style="top:103.13px">Merge Edge</div>
<svg class="a" style="left:357px;top:99.0px" width="16" height="16" viewBox="0 0 16 16"><path d="M3 1.5 L3 5 Q1.5 6 2 8 Q3 11 7 10 L9 10 L9 14.5 L12 11 Q14.5 9 13.5 7 Q12.5 5 9 6 L6 6 Z" fill="#9f74e6"/></svg>
<div class="mi" style="top:121.83px">Bridge</div>
<svg class="a" style="left:357px;top:117.7px" width="16" height="16" viewBox="0 0 16 16"><path d="M3 2 L3 5 Q1.5 7 3 9 L8 9 L8 12 L12 9.5 Q14 7.5 12 6 L7 6 Z" fill="#b08ae9"/><path d="M3 10 Q5 13 9 13" stroke="#999" stroke-width="1" fill="none"/></svg>
<div class="mi" style="top:140.53px">Fill Hole</div>
<svg class="a" style="left:357px;top:136.4px" width="16" height="16" viewBox="0 0 16 16"><path d="M1.5 10 L8 6 L14.5 10 L8 14 Z" fill="none" stroke="#8a8a8a" stroke-width="1"/><path d="M4 10 L8 8 L12 10 L8 12 Z" fill="none" stroke="#aaa" stroke-width=".7"/><path d="M8 3v7" stroke="#888" stroke-width="1"/><circle cx="8" cy="2.5" r="1.5" fill="#a27ae8"/></svg>
<div class="mi" style="top:159.23px">Erase And Fill</div>
<svg class="a" style="left:357px;top:155.1px" width="16" height="16" viewBox="0 0 16 16"><path d="M3 2h10v1.5h-3.5v9H13V14H3v-1.5h3.5v-9H3z" fill="#9f74e6"/><path d="M8.5 5.5l4 4M12.5 5.5l-4 4" stroke="#e02020" stroke-width="1.5"/></svg>
<div class="mi" style="top:177.93px">Weld Vertices</div>
<svg class="a" style="left:357px;top:173.8px" width="16" height="16" viewBox="0 0 16 16"><path d="M1.3 9.5 Q3.5 4.5 7.5 2.8 Q9.7 4.8 9.6 7.5 Q7.6 10.5 6.8 14.4 Q3.5 13.2 1.3 11Z" fill="#9f74e6" stroke="#7a52c7" stroke-width=".5"/><circle cx="9" cy="9" r="1.4" fill="#7fb0e8"/><circle cx="8.3" cy="12.3" r="1.2" fill="#3b82d6"/><circle cx="5" cy="7" r="1.2" fill="#d6c4fa"/></svg>
<div class="mi" style="top:196.63px">UnWeld Edges</div>
<svg class="a" style="left:357px;top:192.5px" width="16" height="16" viewBox="0 0 16 16"><path d="M1.3 9.5 Q3.5 4.5 7.5 2.8 Q9.7 4.8 9.6 7.5 Q7.6 10.5 6.8 14.4 Q3.5 13.2 1.3 11Z" fill="#9f74e6"/><path d="M2.5 8 Q5 5.5 8.5 4.5" stroke="#e0d2fb" stroke-width="1" fill="none"/><path d="M11.5 5.5l2 .8M9 12.5l-.6 2.5" stroke="#222" stroke-width="1.4"/></svg>
<div class="ms" style="top:210px"></div>
<div class="mi" style="top:216.13px">Crease</div>
<svg class="a" style="left:357px;top:212.0px" width="16" height="16" viewBox="0 0 16 16"><path d="M2.5 5 L9.5 3 L14 6.5 L9 9.5 L8.5 13.5 L3 11Z" fill="#9f74e6"/><path d="M3 9 L7 11 L6 14.5 L2 12.5Z" fill="#fff" stroke="#999" stroke-width=".7"/><rect x="1" y="4.5" width="1.6" height="1.6" fill="#333"/><rect x="6.5" y="1" width="2.4" height="1.2" fill="#333"/><path d="M9.5 3 L14 6.5" stroke="#aaa" stroke-width=".8"/></svg>
<div class="mi" style="top:234.83px">UnCrease</div>
<svg class="a" style="left:357px;top:230.7px" width="16" height="16" viewBox="0 0 16 16"><path d="M2.5 5.5 L9.5 3.5 L14 7 L9 10 L8.5 14 L3 11.5Z" fill="#b18ef0"/><path d="M3 9.5 L7 11.5 L6 15 L2 13Z" fill="#fff" stroke="#999" stroke-width=".7"/><path d="M1 4.5h1.8M5.5 1.5h1.5M9 1.5h1.5" stroke="#333" stroke-width="1.1"/></svg>
<div class="mi" style="top:253.53px">Bevel Edge</div>
<svg class="a" style="left:357px;top:249.4px" width="16" height="16" viewBox="0 0 16 16"><path d="M1.5 15 L1.5 6.5 L7 2 L13.5 9 L10 15 Z" fill="#b4b4ac"/><path d="M5.5 2.8 Q7 1 8.8 2.5 L14.5 8.5 Q15.3 10.5 13.2 12 Z" fill="#a27ae8" stroke="#fff" stroke-width="1"/></svg>
<div class="mi" style="top:272.24px">Slide Edge</div>
<svg class="a" style="left:357px;top:268.1px" width="16" height="16" viewBox="0 0 16 16"><path d="M1.5 10 Q3.5 5 8.5 3 Q11.5 4.5 14 4.5 Q10.5 8 8.5 14.5 Q5 13.5 1.5 12Z" fill="#9f74e6"/><circle cx="9" cy="6" r=".9" fill="#333"/><circle cx="5.5" cy="10.5" r=".9" fill="#555"/><path d="M4 8.5 L8 6.5" stroke="#d8c8fa" stroke-width=".8"/></svg>
<div class="ms" style="top:286px"></div>
<div class="mi" style="top:291.74px">Smooth</div>
<svg class="a" style="left:357px;top:287.6px" width="16" height="16" viewBox="0 0 16 16"><path d="M2 7 L8 2.5 L14 5.5 L9.5 11 Z" fill="#9f74e6"/><path d="M2 7 L9.5 11 L9.5 12.5 L2 8.5Z" fill="#c8c8c8"/><path d="M10.5 12 L10.5 15.5" stroke="#222" stroke-width="1.2"/></svg>
<div class="mi" style="top:310.44px">Cylindrify</div>
<svg class="a" style="left:357px;top:306.3px" width="16" height="16" viewBox="0 0 16 16"><path d="M2 2.5h12M2 13.5h12M3.5 2.5 Q5.5 8 3.5 13.5" fill="none" stroke="#999" stroke-width="1.4"/><path d="M12.5 2.5 Q10.5 8 12.5 13.5" fill="none" stroke="#9b72e0" stroke-width="1.6"/><circle cx="8.5" cy="7" r=".9" fill="#222"/></svg>
<div class="mi" style="top:329.13px">Pull</div>
<svg class="a" style="left:357px;top:325.0px" width="16" height="16" viewBox="0 0 16 16"><path d="M1 1.5 Q8.5 3 8.5 8 Q8.5 13 1 14.5 Z" fill="#9f74e6"/><path d="M10 2h3v12h-3M10.5 5h2M10.5 8h2M10.5 11h2" fill="none" stroke="#777" stroke-width=".9"/></svg>
<div class="mi" style="top:347.83px">Flatten</div>
<svg class="a" style="left:357px;top:343.7px" width="16" height="16" viewBox="0 0 16 16"><path d="M1 9 L5 6 L15 6 L11 9 Z M1 9 V15 H11 V9 M11 15 L15 12 V6" fill="none" stroke="#5ba5e6" stroke-width=".7" stroke-dasharray="1 .6"/><path d="M2 4 L5 2.5 L7 4.5 L10 2 L14 4 L11 7 L3 7 Z" fill="#9f74e6"/></svg>
<div class="mi" style="top:366.54px">Straighten</div>
<svg class="a" style="left:357px;top:362.4px" width="16" height="16" viewBox="0 0 16 16"><path d="M2.5 9 Q4 4 9 3 L14 4 L11 8 Q8 8.5 6 13 L2.5 12 Z" fill="#9f74e6"/><path d="M5 9 Q7 6 10.5 5.5" stroke="#d0bcf7" stroke-width=".8" fill="none"/></svg>
<div class="mi" style="top:385.24px">Match</div>
<svg class="a" style="left:357px;top:381.1px" width="16" height="16" viewBox="0 0 16 16"><path d="M3 2 L3 14" stroke="#999" stroke-width="1.2"/><path d="M3 7 Q8 5 14 8 L11 10 Q6 9 4.5 12 Z" fill="#9f74e6"/><path d="M1.5 3 L5 1.5" stroke="#aaa" stroke-width=".8"/></svg>
<div class="mi" style="top:403.94px">Interpolate</div>
<svg class="a" style="left:357px;top:399.8px" width="16" height="16" viewBox="0 0 16 16"><path d="M1.5 3 Q11 3.5 13.5 13.5 L6.5 13.5 Q6 8.5 1.5 8.5Z" fill="#a27ae8"/><rect x="1" y="2" width="2" height="1.8" fill="#3a5a4a"/><rect x="12.5" y="12.8" width="2" height="1.8" fill="#3a4a5a"/><path d="M11 5.5 L14 2.5" stroke="#555" stroke-width="1" stroke-dasharray="1.2 .8"/><path d="M13.5 6v2M14.5 9v2" stroke="#888" stroke-width=".8"/></svg>
<div class="ms" style="top:418px"></div>
<div class="mi" style="top:423.44px">Thicken</div>
<svg class="a" style="left:357px;top:419.3px" width="16" height="16" viewBox="0 0 16 16"><path d="M1.5 9 L8 4 L14.5 7 L8 12 Z" fill="#a57de8"/><path d="M1.5 9 L8 12 L14.5 7 L14.5 9 L8 14 L1.5 11 Z" fill="#3b8ee0"/></svg>
<div class="ms" style="top:437px"></div>
<div class="mi" style="top:442.94px">Freeze</div>
<div class="ms" style="top:457px"></div>
<div class="mi" style="top:462.44px">Move/Copy</div>
<svg class="a" style="left:357px;top:458.3px" width="16" height="16" viewBox="0 0 16 16"><path d="M8 1.5v13M1.5 8h13" stroke="#333" stroke-width="1.2"/><path d="M8 0.5l-2.2 2.7h4.4zM8 15.5l-2.2-2.7h4.4zM0.5 8l2.7-2.2v4.4zM15.5 8l-2.7-2.2v4.4z" fill="#333"/></svg>
<div class="mi" style="top:481.14px">Align</div>
<svg class="a" style="left:357px;top:477.0px" width="16" height="16" viewBox="0 0 16 16"><path d="M1.5 1v14" stroke="#5fa8e0" stroke-width="1"/><rect x="3" y="4" width="6" height="4" fill="none" stroke="#888" stroke-width=".8"/><rect x="3" y="9.5" width="11" height="4" fill="#3e9ae0"/></svg>
<div class="mi" style="top:499.84px">Delete</div>
<svg class="a" style="left:357px;top:495.7px" width="16" height="16" viewBox="0 0 16 16"><path d="M2.5 2.5l11 11M13.5 2.5l-11 11" stroke="#e81c1c" stroke-width="2.4"/></svg>
<div class="ms" style="top:514px"></div>
<div class="mi" style="top:519.33px">Physical Material</div>
<svg class="a" style="left:357px;top:515.2px" width="16" height="16" viewBox="0 0 16 16"><defs><clipPath id="pmc"><circle cx="8" cy="8" r="6.6"/></clipPath></defs><circle cx="8" cy="8" r="7" fill="#fff" stroke="#444" stroke-width="1"/><g clip-path="url(#pmc)" fill="#444"><rect x="6.3" y="1" width="3.4" height="3"/><rect x="2.5" y="4" width="3.5" height="3.2"/><rect x="10" y="4" width="3.5" height="3.2"/><rect x="6.3" y="6.5" width="3.4" height="3"/><rect x="2.5" y="9" width="3.5" height="3.2"/><rect x="10" y="9" width="3.5" height="3.2"/><rect x="6.3" y="12" width="3.4" height="3"/><rect x="0.5" y="6.5" width="1.6" height="3"/><rect x="13.9" y="6.5" width="1.6" height="3"/></g></svg>
<div class="mi" style="top:538.03px">Appearance</div>
<div class="mi" style="top:556.73px">Manage Materials</div>
<svg class="a" style="left:357px;top:552.6px" width="16" height="16" viewBox="0 0 16 16"><rect x="2" y="1.5" width="12" height="13" fill="#f2f2f2" stroke="#aaa" stroke-width=".8"/><path d="M4 4h8M4 6.5h8M4 9h8M6 3v6M10 3v6" stroke="#c2c2c2" stroke-width=".7"/><rect x="4" y="10.5" width="3" height="2.5" fill="#888"/><rect x="9" y="10.5" width="3" height="2.5" fill="#888"/></svg>
<div class="mi" style="left:457.5px;top:462.44px">M</div>
<div class="mi" style="left:457.5px;top:538.03px">A</div>
<svg class="a" style="left:458px;top:498.7px" width="12" height="10" viewBox="0 0 12 10"><path d="M0.5 0.5 H8 L11.5 5 L8 9.5 H0.5Z" fill="none" stroke="#777" stroke-width="1"/><path d="M3 2.8 L6.5 7.2 M6.5 2.8 L3 7.2" stroke="#777" stroke-width="1"/></svg>
<svg class="a" style="left:485px;top:441.8px" width="6" height="9" viewBox="0 0 6 9"><path d="M0.3 0.5 L5.8 4.5 L0.3 8.5Z" fill="#222"/></svg>
<div class="a" style="left:358px;top:534.9px;width:14px;height:14px;border-radius:50%;background:conic-gradient(from 20deg,#ff8a00,#f2443a 70deg,#c0208a 120deg,#7a3de0 165deg,#2a6de8 200deg,#17b6c8 245deg,#2dbb4a 290deg,#b8d020 330deg,#ff8a00)"></div>
</body></html>
